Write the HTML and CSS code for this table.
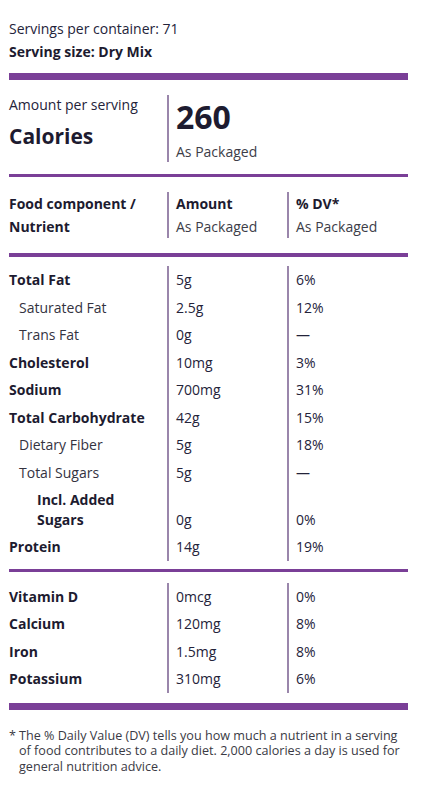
FILE: index.html
```html
<!DOCTYPE html>
<html>
<head>
  <title>Nutrition Facts</title>
  <link rel="stylesheet" href="styles.css">
</head>
<body>

  <div class="label">
    <div class="servings">
      <div>Servings per container: 71</div>
      <div class="bold">Serving size: Dry Mix</div>
    </div>

    <div class="bar bar-thick"></div>

    <div class="calories">
      <div class="cal-left">
        <div>Amount per serving</div>
        <div class="cal-title">Calories</div>
      </div>
      <div class="cal-right">
        <div class="cal-value">260</div>
        <div class="muted">As Packaged</div>
      </div>
    </div>

    <div class="bar bar-thin"></div>

    <div class="table-head">
      <div class="row">
        <div class="cell bold">Food component /<br>Nutrient</div>
        <div class="cell col"><span class="bold">Amount</span><br><span class="muted">As Packaged</span></div>
        <div class="cell col"><span class="bold">% DV*</span><br><span class="muted">As Packaged</span></div>
      </div>
    </div>

    <div class="bar bar-mid"></div>

    <div class="table-body">
      <div class="row"><div class="cell bold">Total Fat</div><div class="cell col">5g</div><div class="cell col">6%</div></div>
      <div class="row"><div class="cell sub">Saturated Fat</div><div class="cell col">2.5g</div><div class="cell col">12%</div></div>
      <div class="row"><div class="cell sub">Trans Fat</div><div class="cell col">0g</div><div class="cell col">—</div></div>
      <div class="row"><div class="cell bold">Cholesterol</div><div class="cell col">10mg</div><div class="cell col">3%</div></div>
      <div class="row"><div class="cell bold">Sodium</div><div class="cell col">700mg</div><div class="cell col">31%</div></div>
      <div class="row"><div class="cell bold">Total Carbohydrate</div><div class="cell col">42g</div><div class="cell col">15%</div></div>
      <div class="row"><div class="cell sub">Dietary Fiber</div><div class="cell col">5g</div><div class="cell col">18%</div></div>
      <div class="row"><div class="cell sub">Total Sugars</div><div class="cell col">5g</div><div class="cell col">—</div></div>
      <div class="row"><div class="cell sub2 bold">Incl. Added<br>Sugars</div><div class="cell col">0g</div><div class="cell col">0%</div></div>
      <div class="row"><div class="cell bold">Protein</div><div class="cell col">14g</div><div class="cell col">19%</div></div>
    </div>

    <div class="bar bar-thin"></div>

    <div class="table-body vitamins">
      <div class="row"><div class="cell bold">Vitamin D</div><div class="cell col">0mcg</div><div class="cell col">0%</div></div>
      <div class="row"><div class="cell bold">Calcium</div><div class="cell col">120mg</div><div class="cell col">8%</div></div>
      <div class="row"><div class="cell bold">Iron</div><div class="cell col">1.5mg</div><div class="cell col">8%</div></div>
      <div class="row"><div class="cell bold">Potassium</div><div class="cell col">310mg</div><div class="cell col">6%</div></div>
    </div>

    <div class="bar bar-thick"></div>

    <div class="footnote">
      <span class="star">*</span>
      <span>The % Daily Value (DV) tells you how much a nutrient in a serving of food contributes to a daily diet. 2,000 calories a day is used for general nutrition advice.</span>
    </div>
  </div>

</body>
</html>
```

FILE: styles.css
```css
body {
  margin: 0;
  background-color: #fff;
  font-family: "Segoe UI", "Open Sans", sans-serif;
  font-size: 14px;
  color: #24233a;
}

.label {
  width: 399px;
  margin-left: 9px;
  padding-top: 17px;
}

.bold {
  font-weight: 700;
  color: #1d1b30;
}

.muted {
  color: #3d3d48;
}

.servings {
  line-height: 23px;
  margin-bottom: 10px;
}

.bar {
  background-color: #7a3f97;
}

.bar-thick {
  height: 7px;
}

.bar-mid {
  height: 4px;
}

.bar-thin {
  height: 3px;
}

/* Блок калорий */
.calories {
  display: grid;
  grid-template-columns: 158px 1fr;
  padding: 15px 0 12px;
}

.cal-left {
  line-height: 20px;
}

.cal-title {
  font-size: 21px;
  font-weight: 700;
  color: #1d1b30;
  line-height: 30px;
  margin-top: 6px;
}

.cal-right {
  border-left: 2px solid #9a86ab;
  padding-left: 7px;
  line-height: 20px;
}

.cal-value {
  font-size: 32px;
  font-weight: 700;
  color: #1d1b30;
  line-height: 40px;
  margin: 2px 0 5px;
}

/* Таблица */
.row {
  display: grid;
  grid-template-columns: 158px 120px 1fr;
  align-items: end;
}

.cell {
  padding: 4px 0;
  line-height: 19.5px;
}

.cell.col {
  border-left: 2px solid #9a86ab;
  padding-left: 7px;
  align-self: stretch;
  display: flex;
  flex-direction: column;
  justify-content: flex-end;
}

.table-head {
  padding: 15px 0 15px;
}

.table-head .cell {
  padding-top: 0;
  padding-bottom: 0;
  line-height: 23px;
}

.table-head .cell.col {
  display: block;
}

.table-body {
  padding: 9px 0 8px;
}

.vitamins {
  padding: 11px 0 10px;
}

.sub {
  padding-left: 10px;
  color: #34333f;
}

.sub2 {
  padding-left: 28px;
}

.footnote {
  display: flex;
  font-size: 12.6px;
  line-height: 15.5px;
  color: #3a3a44;
  padding-top: 18px;
}

.footnote .star {
  width: 10px;
  flex-shrink: 0;
}
```
